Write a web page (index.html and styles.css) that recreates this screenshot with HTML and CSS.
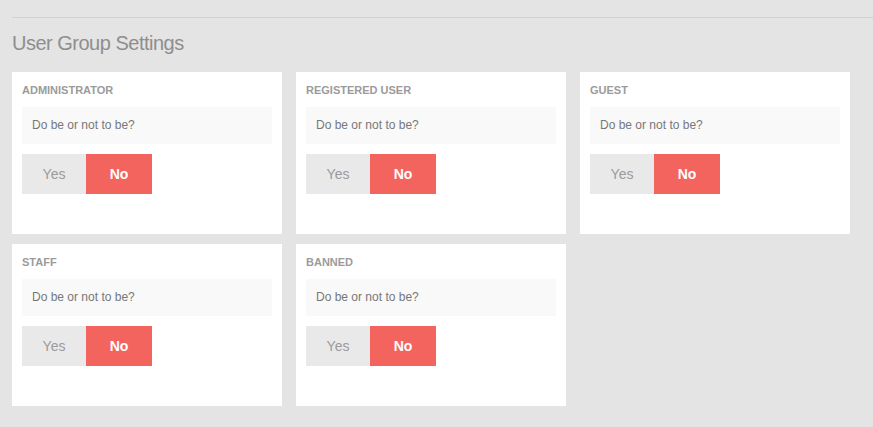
FILE: index.html
```html
<!DOCTYPE html>
<html lang="en">
<head>
<meta charset="utf-8">
<title>User Group Settings</title>
<link rel="stylesheet" href="styles.css">
</head>
<body>
<div class="page">
  <hr class="rule">
  <h1 class="heading">User Group Settings</h1>
  <div class="grid">
    <div class="card">
      <div class="card-title">ADMINISTRATOR</div>
      <div class="question">Do be or not to be?</div>
      <div class="toggle"><span class="btn btn-yes">Yes</span><span class="btn btn-no">No</span></div>
    </div>
    <div class="card">
      <div class="card-title">REGISTERED USER</div>
      <div class="question">Do be or not to be?</div>
      <div class="toggle"><span class="btn btn-yes">Yes</span><span class="btn btn-no">No</span></div>
    </div>
    <div class="card">
      <div class="card-title">GUEST</div>
      <div class="question">Do be or not to be?</div>
      <div class="toggle"><span class="btn btn-yes">Yes</span><span class="btn btn-no">No</span></div>
    </div>
    <div class="card">
      <div class="card-title">STAFF</div>
      <div class="question">Do be or not to be?</div>
      <div class="toggle"><span class="btn btn-yes">Yes</span><span class="btn btn-no">No</span></div>
    </div>
    <div class="card">
      <div class="card-title">BANNED</div>
      <div class="question">Do be or not to be?</div>
      <div class="toggle"><span class="btn btn-yes">Yes</span><span class="btn btn-no">No</span></div>
    </div>
  </div>
</div>
</body>
</html>
```
FILE: styles.css
```css
html, body {
  margin: 0;
  padding: 0;
  background: #e4e4e4;
  font-family: "Liberation Sans", Arial, sans-serif;
}

.page {
  padding: 17px 0 0 12px;
}

.rule {
  margin: 0;
  border: 0;
  height: 1px;
  background: #d1d1d1;
}

.heading {
  margin: 0;
  padding-top: 13px;
  font-size: 20px;
  line-height: 24px;
  font-weight: normal;
  letter-spacing: -0.5px;
  color: #8e8e8e;
}

.grid {
  margin-top: 17px;
  display: grid;
  grid-template-columns: repeat(3, 270px);
  column-gap: 14px;
  row-gap: 10px;
}

.card {
  background: #fff;
  height: 162px;
  box-sizing: border-box;
  padding: 10px 10px 0 10px;
}

.card-title {
  font-size: 11px;
  font-weight: bold;
  line-height: 17px;
  color: #9b9b9b;
  margin-bottom: 8px;
}

.question {
  background: #f9f9f9;
  padding: 10px;
  font-size: 12px;
  line-height: 17px;
  color: #777;
}

.toggle {
  display: flex;
  margin-top: 10px;
}

.btn {
  height: 40px;
  display: flex;
  align-items: center;
  justify-content: center;
  font-size: 14px;
}

.btn-yes {
  width: 64px;
  background: #e9e9e9;
  color: #9b9b9b;
}

.btn-no {
  width: 66px;
  background: #f4645f;
  color: #fff;
  font-weight: bold;
}
```
